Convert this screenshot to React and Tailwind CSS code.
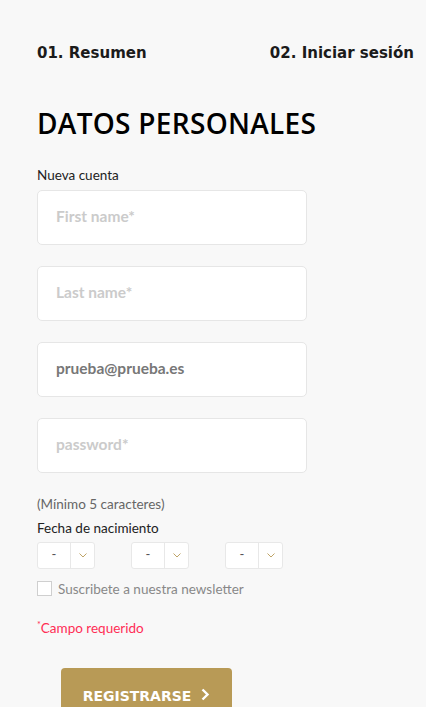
import React from "react";

const head = { fontFamily: '"DejaVu Sans", "Open Sans", sans-serif' };
const title = { fontFamily: '"Open Sans", "DejaVu Sans", sans-serif' };

function Field({ placeholder, value }) {
  return (
    <div className="h-[55px] w-[270px] rounded-[5px] border border-[#e6e6e6] bg-white px-[18px] flex items-center">
      {value ? (
        <span className="text-[15.5px] font-bold text-[#777777]">{value}</span>
      ) : (
        <span className="text-[15.5px] font-bold text-[#cbcbcb]">{placeholder}</span>
      )}
    </div>
  );
}

function DateSelect() {
  return (
    <div className="flex h-[27px] w-[58px] rounded-[3px] border border-[#e8e8e8] bg-white">
      <div className="flex w-[32px] items-center justify-center text-[13px] text-[#555]">-</div>
      <div className="flex flex-1 items-center justify-center border-l border-[#e8e8e8]">
        <svg width="8" height="5" viewBox="0 0 8 5" fill="none">
          <path d="M0.5 0.5 L4 4 L7.5 0.5" stroke="#b89a56" strokeWidth="0.9" />
        </svg>
      </div>
    </div>
  );
}

export default function App() {
  return (
    <div
      className="min-h-[707px] w-[426px] overflow-hidden bg-[#f8f8f8] text-[#222]"
      style={{ fontFamily: 'Lato, "Open Sans", sans-serif' }}
    >
      {/* pasos */}
      <div className="flex justify-between pl-[37px] pr-[12px] pt-[42px]" style={head}>
        <span className="text-[15px] font-bold text-[#1b1b1b]">01. Resumen</span>
        <span className="text-[15px] font-bold text-[#1b1b1b]">02. Iniciar sesión</span>
      </div>

      <div className="px-[37px]">
        <h1 className="mt-[42px] text-[28px] font-semibold leading-[32px] tracking-[0.3px] text-black" style={title}>
          DATOS PERSONALES
        </h1>

        <p className="mt-[28px] text-[13.5px] leading-[16px] text-[#222]">Nueva cuenta</p>

        <div className="mt-[7px] flex flex-col gap-[21px]">
          <Field placeholder="First name*" />
          <Field placeholder="Last name*" />
          <Field value="prueba@prueba.es" />
          <Field placeholder="password*" />
        </div>

        <p className="mt-[23px] text-[13.5px] leading-[16px] text-[#666]">(Mínimo 5 caracteres)</p>
        <p className="mt-[8px] text-[13.5px] leading-[16px] text-[#222]">Fecha de nacimiento</p>

        <div className="mt-[6px] flex gap-[36px]">
          <DateSelect />
          <DateSelect />
          <DateSelect />
        </div>

        <div className="mt-[10px] flex items-center gap-[6px]">
          <div className="h-[15px] w-[15px] border border-[#cfcfcf] bg-white" />
          <span className="text-[13.5px] text-[#888]">Suscribete a nuestra newsletter</span>
        </div>

        <p className="mt-[19px] text-[13.5px] text-[#ff2d55]">
          <sup className="text-[9px]">*</sup>Campo requerido
        </p>

        <button
          className="ml-[24px] mt-[30px] flex h-[50px] w-[171px] items-start justify-center gap-[10px] rounded-t-[4px] bg-[#b89a56] pt-[18px] text-[14px] font-bold text-white"
          style={head}
        >
          REGISTRARSE
          <svg width="9" height="13" viewBox="0 0 9 13" className="mt-[2px]">
            <path d="M1.5 1.5 L6.5 6.5 L1.5 11.5" stroke="white" strokeWidth="2.4" fill="none" />
          </svg>
        </button>
      </div>
    </div>
  );
}
